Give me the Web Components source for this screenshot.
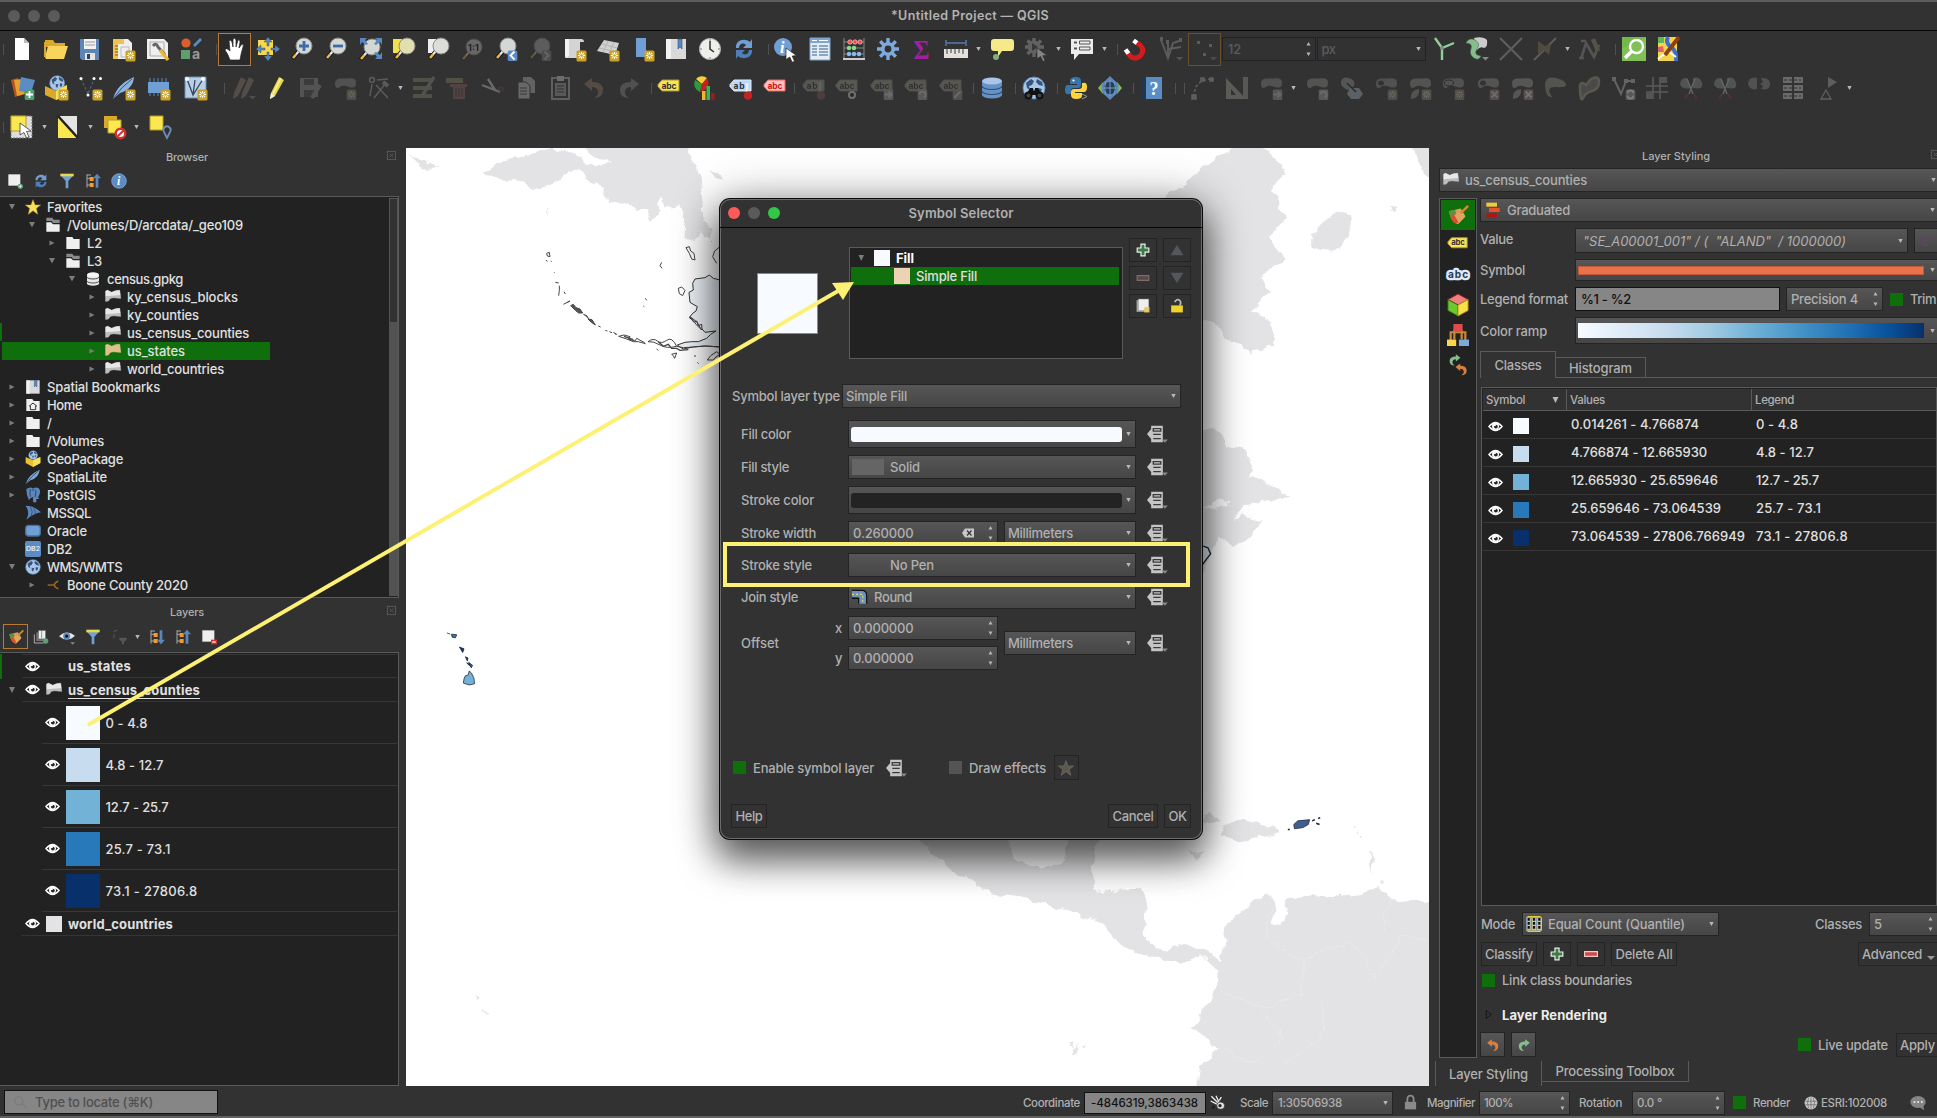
<!DOCTYPE html>
<html lang="en">
<head>
<meta charset="utf-8">
<title>QGIS</title>
<style>
html,body{margin:0;padding:0;background:#323232;width:1937px;height:1118px;overflow:hidden}
body{font:450 13px/18px Inter,"Liberation Sans",sans-serif;color:#b0b0b0}
</style>
</head>
<body>
<qgis-app></qgis-app>
<script>
/* ---------- icon drawings, 24 x 24 grid ---------- */
const star8='<path d="M0-3.6V3.6M-3.6 0H3.6M-2.6-2.6L2.6 2.6M-2.6 2.6L2.6-2.6" stroke="#fff" stroke-width="1.1"/><circle r="1.3" fill="#c9a227"/>';
const badge=`<g transform="translate(18.5 18.5)"><rect x="-5" y="-5" width="10" height="11" rx="1.5" fill="#c9a227"/>${star8}</g>`;
const sq=(c,i)=>`<g transform="translate(18.5 18.5)"><rect x="-4.8" y="-5" width="9.6" height="10.5" rx="1.5" fill="${c}"/>${i}</g>`;
const wp=d=>`<path d="${d}" stroke="#fff" stroke-width="1.8" fill="none"/>`;
const lens=(cx,cy,f)=>`<path d="M${cx-5} ${cy+5}L${cx-11.5} ${cy+12.5}" stroke="#111" stroke-width="4"/><path d="M${cx-8} ${cy+8.5}L${cx-11} ${cy+12}" stroke="#f4b942" stroke-width="2.6"/><path d="M${cx-5} ${cy+5}L${cx-8} ${cy+8.5}" stroke="#eee" stroke-width="2.2"/><circle cx="${cx}" cy="${cy}" r="8" fill="${f||'#d4d8d4'}" stroke="#8a8a8a"/>`;
const tag=(f,b,t,c)=>`<path d="M1 8.5L5 4H22V15H5L1 10.5Z" fill="${f}" stroke="${b}"/><text x="4.500" y="12.500" font-size="8.500" font-weight="700" fill="${c||'#333'}" textLength="${t==='ab'?11:15}" font-family="Inter">${t||'abc'}</text>`;
const blob='<path d="M2 7C3 1 9 3 14 2.500S23 2 23 7S20 12 16 11S10 9 7 11S2 12 2 7Z" fill="#a8aca6"/>';
const sync='<path d="M4 11C3 4 12 0 18 5L20 2V11H11L14 8C11 5 7 7 7 11Z" fill="#6f9fd4"/><path d="M20 13C21 20 12 24 6 19L4 22V13H13L10 16C13 19 17 17 17 13Z" fill="#4f7fb8"/>';
const pal='<path d="M2 8L15 5L20 13L12 22Q5 21 2 8Z" fill="#d9a05a"/><path d="M2 8L9 6L10 12L4 15Z" fill="#5f8f40"/><path d="M4 13L10 11L14 20L9 21Q5 19 4 13Z" fill="#d9502a"/><path d="M8 12L16 8L20 14L13 21Z" fill="#e0a560"/><path d="M15 10L23 2" stroke="#d98a2a" stroke-width="2.6"/>';
const polyd='M1 3L4 2L10 5L16 2.500L22 2L23.500 14L18 13.500L13 13L8 14L5 18L1 18.500Z';
const dd='<path d="M17 20H24L20.500 23.500Z" fill="#888"/>';
const globe='<circle cx="12" cy="12" r="11" fill="#a9c6e8" stroke="#5b87bd"/><path d="M4 7L9 3L12 5L10 9L7 10L8 14L5 12ZM15 3L20 6L21 10L17 9L14 6ZM10 13L14 14L12 19L10 17ZM16 12L20 13L18 18L16 16Z" fill="#36557c"/>';
const fold='<path d="M2 3H11L13 6H22V21H2Z" fill="#efefef"/>';
const curs='<path d="M0 0L11 8L6.500 8.500L9 14L6.500 15L4 9.500L0 12Z" fill="#fff" stroke="#222" stroke-width=".7"/>';
const db='<path d="M2 5V19A10 3.500 0 0 0 22 19V5Z" fill="#6792c6"/><ellipse cx="12" cy="5" rx="10" ry="3.500" fill="#a9c6e8"/><path d="M2 10A10 3.500 0 0 0 22 10M2 15A10 3.500 0 0 0 22 15" stroke="#2c4f7c" fill="none" stroke-width="1.200"/>';
const tree='<path d="M3 2V22M3 3H9M3 8H9M3 18H9" stroke="#aaa" stroke-width="1.500" fill="none"/><path d="M7 6H13V12H7ZM7 15H13V21H7Z" fill="#f09a30"/>';
const undo='<path d="M2 8L10 2V6Q21 6 21 14T12 22Q17 19 16 15T10 11V15Z" fill="#d9803c"/>';
const redo='<path d="M22 8L14 2V6Q3 6 3 14T12 22Q7 19 8 15T14 11V15Z" fill="#86bd8c"/>';
const cross=wp('M-3-3L3 3M3-3L-3 3'),right=wp('M-4 0H3M0-3L3 0L0 3'),turn=wp('M-3 0A3 3 0 1 1 1 3');
const part='<path d="M3 23Q2 14 11 13Q12 22 3 23Z" fill="#aaa"/>';
const I={
new:'<path d="M5 1H14L19 6V23H5Z" fill="#fff"/><path d="M14 1V6H19" fill="#bbb"/>',
open:'<path d="M1 3H9L11 6H21V10H1Z" fill="#d9a92e"/><path d="M1 20L4 9H24L20 22H2Z" fill="#f8d45c"/><path d="M1 5V20" stroke="#d9a92e" stroke-width="2"/>',
save:'<path d="M2 2H21V23H4L2 21Z" fill="#5d86b8"/><path d="M6 2H18V12H6Z" fill="#f2f2f2"/><path d="M7 5H17M7 8H17" stroke="#999"/><path d="M7 16H17V23H7Z" fill="#e4e4e4"/><path d="M9 17H12V22H9Z" fill="#345"/>',
layout:'<path d="M1 2H16L20 6V22H1Z" fill="#eee"/><path d="M1 2H6V22H1ZM6 2H12V7H6Z" fill="#eec54a"/><path d="M3 9H6M3 12H6M3 15H6M3 18H6" stroke="#7a5c10"/><path d="M9 10H17V20H9Z" stroke="#bbb" fill="none"/>'+badge,
layman:'<path d="M1 2H18L22 6V22H1Z" fill="#efefef"/><path d="M4 5H18V19H4Z" stroke="#aaa" fill="none"/><path d="M7 9Q10 5 12 10L19 18" stroke="#666" stroke-width="3" fill="none"/><path d="M14 13L22 23" stroke="#e8b93c" stroke-width="3.600"/>',
style:'<circle cx="6" cy="6" r="4.600" fill="#d95f2f"/><path d="M14 9L21 2" stroke="#5d8cc4" stroke-width="2.600"/><path d="M1 13H10V22H1Z" fill="#5f9e6e"/><text x="12" y="22" font-size="14" font-family="Inter" font-weight="700" fill="#9a9a9a">a</text>',
hand:'<path d="M7 23Q5 17 2 13Q3 10 7 14L6 4Q8 2 9 5L10 10L10 2Q12 0 13 3V10L15 3Q17 2 17 5L16 11L19 7Q21 7 20 10Q18 16 17 23Z" fill="#fff" stroke="#222" stroke-width=".7"/>',
pansel:'<path d="M2 3H17V18H2Z" fill="#f4d94a"/><path d="M12 0L16 5H13V9H11V5H8ZM24 12L19 8V11H15V13H19V16ZM12 24L8 19H11V15H13V19H16ZM0 12L5 16V13H9V11H5V8Z" fill="#5b87bd" stroke="#2c3f58" stroke-width=".4"/>',
zin:lens(14,9)+'<path d="M14 4V14M9 9H19" stroke="#3c6ba5" stroke-width="2.800"/>',
zout:lens(14,9)+'<path d="M9 9H19" stroke="#3c6ba5" stroke-width="2.800"/>',
zfull:lens(13,10)+'<path d="M1 1H8L6 3L9 7L7 8L3 5L1 8ZM23 1H16L18 3L15 7L17 8L21 5L23 8ZM23 22H16L18 20L15 16L17 15L21 18L23 15Z" fill="#5b87bd"/>',
zsel:'<path d="M1 2H12V16H1Z" fill="#f4e04a"/>'+lens(15,9,'#e2dfae'),
zlay:'<path d="M2 2H13V16H2Z" fill="#eee"/>'+lens(15,9,'#dcdcd8'),
z11:'<g opacity=".32">'+lens(14,10)+'<text x="8" y="14" font-size="9" font-weight="700" font-family="Inter">1:1</text></g>',
zlast:lens(14,9)+sq('#5b8cc4',wp('M2-4L-2 0L2 4')),
znext:'<g opacity=".25">'+lens(14,9)+sq('#999',wp('M-2-4L2 0L-2 4'))+'</g>',
mapv:'<path d="M2 2H18Q21 2 21 5H17V21H3Q2 21 2 19Z" fill="#d4d4d4"/><path d="M2 2H6V19L3 21Q2 20 2 18Z" fill="#f2f2f2"/>'+badge,
map3:'<path d="M8 3L23 6L19 18L1 14Z" fill="#d0d0d0"/><path d="M6 7L21 11M3 11L20 15M12 4L7 15M18 5L13 17" stroke="#b4b4b4"/>'+badge,
bmnew:'<path d="M5 1H15V20H5Z" fill="#6f9fd4"/>'+badge,
bm:'<path d="M2 2H22V22H2Z" fill="#d9d9d9"/><path d="M2 2H7V22H2Z" fill="#f2f2f2"/><path d="M14 2H18V12L16 10L14 12Z" fill="#5b87bd" stroke="#2c4f7c" stroke-width=".6"/>',
clock:'<circle cx="12" cy="12" r="10.600" fill="#efefea" stroke="#aaa"/><path d="M12 4V12L16 15" stroke="#333" stroke-width="1.500" fill="none"/><path d="M12 2V4M22 12H20M12 22V20M2 12H4" stroke="#777"/>',
sync,
ident:'<circle cx="10" cy="10" r="9" fill="#6f9fd4"/><text x="7" y="16" font-size="16" font-style="italic" font-weight="700" fill="#fff" font-family="Liberation Serif">i</text><g transform="translate(13 11) scale(.95)">'+curs+'</g>',
table:'<path d="M2 1H22V23H2Z" fill="#e4ecf4" stroke="#7fa5cc"/><path d="M2 1H22V6H2Z" fill="#7fa5d4"/><path d="M4 9H9M4 12H9M4 15H9M4 18H9M11 9H20M11 12H20M11 15H20M11 18H20" stroke="#6f8fb0" stroke-width="1.300"/><path d="M4 3.500H9M11 3.500H20" stroke="#fff"/>',
abac:'<path d="M2 1V22M22 1V22M2 5H22M2 11H22M2 17H22" stroke="#888" fill="none"/><path d="M1 22H23" stroke="#ccc" stroke-width="2"/><g fill="#f44" stroke="#fff" stroke-width=".5"><circle cx="8" cy="5" r="2.200"/><circle cx="13" cy="5" r="2.200"/><circle cx="18" cy="5" r="2.200"/></g><g fill="#8d8"><circle cx="7" cy="11" r="2.200"/><circle cx="12" cy="11" r="2.200"/></g><g fill="#8be"><circle cx="7" cy="17" r="2.200"/><circle cx="12" cy="17" r="2.200"/><circle cx="17" cy="17" r="2.200"/></g>',
gear:'<g stroke="#7da9dc" stroke-width="3.400"><path d="M12 1V23M1 12H23M4.200 4.200L19.800 19.800M4.200 19.800L19.800 4.200"/></g><circle cx="12" cy="12" r="7" fill="#7da9dc"/><circle cx="12" cy="12" r="3.400" fill="#323232"/>',
sigma:'<text x="3.500" y="21.500" font-size="27" font-weight="700" font-family="Liberation Serif" textLength="16" lengthAdjust="spacingAndGlyphs" fill="#a020a0">Σ</text>',
meas:'<path d="M1 6H23M2 3V9M22 3V9" stroke="#4a6890" stroke-width="2"/><path d="M0 12H24V21H0Z" fill="#e4e0dc"/><path d="M3 12V17M7 12V16M11 12V17M15 12V16M19 12V17" stroke="#555" stroke-width="1.200"/>',
tip:'<path d="M4 2H21Q24 2 24 5V11Q24 14 21 14H12L8 20V14H4Q1 14 1 11V5Q1 2 4 2Z" fill="#f5e98a"/><circle cx="6" cy="20" r="3" fill="#7fb07f"/>',
act:'<g opacity=".4"><g stroke="#aaa" stroke-width="3.400"><path d="M10 1V20M1 10H20M3.500 3.500L17 17M3.500 17L17 3.500"/></g><circle cx="10" cy="10" r="6.500" fill="#aaa"/><path d="M8 6L14 10L8 14Z" fill="#444"/><g transform="translate(13 11) scale(.9)">'+curs+'</g></g>',
form:'<path d="M1 2H23V17H9L4 23V17H1Z" fill="#ececec"/><path d="M4 5.500H7M4 11.500H7" stroke="#555" stroke-width="2"/><path d="M9.500 4H20V7H9.500ZM9.500 10H20V13H9.500Z" fill="none" stroke="#555"/>',
magnet:'<path d="M11 4.500L16 8Q21 13 17 18T7 20L3 15" fill="none" stroke="#d01c1c" stroke-width="5"/><path d="M9.500 3.500L13 6M1.500 12.500L4.500 16.500" stroke="#fff" stroke-width="4.500"/>',
snapv:'<g opacity=".3" stroke="#bbb" stroke-width="2" fill="none"><path d="M2 3L9 21L14 6L20 4M9 21V6M9 12L22 10"/><path d="M1 2H4M7 5H10M20 3H23" stroke-width="4"/></g><g opacity=".4">'+dd+'</g>',
snapt:'<g opacity=".3" fill="#bbb"><path d="M4 4H7V7H4ZM16 7H19V10H16ZM10 16H13V19H10Z"/>'+dd+'</g>',
topo:'<path d="M4 1L11 11L23 6M11 11V23" stroke="#8fd09a" stroke-width="2.400" fill="none"/><circle cx="11" cy="11" r="2" fill="#888"/>',
topo2:'<path d="M9 1Q18-1 22 3Q23 10 19 11Q15 9 12 13Z" fill="#ccc"/><path d="M1 6Q4 0 10 3T12 12T16 19Q14 24 9 21T6 12T1 6Z" fill="#86bd8c" stroke="#4c6c50" stroke-width=".6"/>'+dd,
xx:'<path d="M1 1L23 23M23 1L1 23" stroke="#777" opacity=".65" stroke-width="2"/>',
xz:'<g opacity=".5"><path d="M1 23L23 1" stroke="#888" stroke-width="2"/><path d="M5 4L12 9L18 7L16 18L11 13L5 18Z" fill="#6d6550"/></g>',
nn:'<g opacity=".5" stroke="#777" stroke-width="2.600" fill="none"><path d="M3 22L8 6L16 20L21 8M3 4H8M1 21H6"/><path d="M15 2L20 14" stroke="#7a7258" stroke-width="4.500"/></g>',
osmq:'<path d="M0 0H24V24H0Z" fill="#74b84c"/><path d="M0 24V12L24 0V24Z" fill="#8cc860" opacity=".5"/><circle cx="14.500" cy="9.500" r="6.500" fill="none" stroke="#fff" stroke-width="2.400"/><path d="M10 14L3 21" stroke="#fff" stroke-width="3.400"/>',
osmm:'<path d="M2 0H21V24H2Z" fill="#f6d44a"/><path d="M2 0H8V6H2Z" fill="#5db85a"/><path d="M12 0Q9 6 15 10T20 24" stroke="#3a6fd0" stroke-width="4" fill="none"/><path d="M2 10L7 9L8 15H2Z" fill="#d66"/><path d="M2 22L12 14L20 20" stroke="#fff" stroke-width="2" fill="none"/><path d="M23 0L9 18" stroke="#8c3f12" stroke-width="4"/>',
dsm:'<path d="M0 4L7 2L11 19L4 21Z" fill="#b5541d"/><path d="M3 4L11 3L14 18L6 20Z" fill="#e8a030"/><path d="M10 1L24 4L20 17L8 15Z" fill="#5b8cc4"/>'+sq('#4fa070',wp('M0-3.500V3.500M-3.500 0H3.500')),
gpk:'<g transform="translate(5 -1) scale(.6)">'+globe+'</g><path d="M1 9L12 14L23 9V18L12 24L1 18Z" fill="#e8c32c"/><path d="M12 14L23 9V18L12 24Z" fill="#f8e05a"/>',
gpknew:'<g transform="translate(4 -1) scale(.68)">'+globe+'</g><path d="M0 10L11 15L22 9V19L11 24L0 19Z" fill="#d9a92e"/><path d="M11 15L22 9V19L11 24Z" fill="#f8e05a"/>'+badge,
vnew:'<path d="M2 3L9 18L15 3" stroke="#4a6484" stroke-width="1.200" fill="none" stroke-dasharray="2.500 2"/><g fill="#fff"><circle cx="2" cy="2.500" r="1.500"/><circle cx="9" cy="19" r="1.500"/><circle cx="15" cy="2.500" r="1.500"/><circle cx="21.500" cy="2.500" r="1.500"/></g>'+badge,
spat:'<path d="M1 23Q5 8 22 1Q21 13 8 17Z" fill="#7fa8d8"/><path d="M1 23Q9 11 20 3" stroke="#26405e" stroke-width="1.200" fill="none"/>',
spatn:'<path d="M1 23Q5 8 22 1Q21 13 8 17Z" fill="#8fb4de"/><path d="M1 23Q9 11 20 3" stroke="#2f5685" fill="none"/>'+badge,
chip:'<path d="M3 2V20M7 2V20M11 2V20M15 2V20M19 2V20" stroke="#5b87bd"/><path d="M1 6H22V17H1Z" fill="#6f9fd4"/>'+badge,
vsh:'<path d="M1 1H22V22H1Z" fill="#b9cfe8" stroke="#6d8db5"/><path d="M3 3L9 19L19 3M11 4L9 19" stroke="#33475f" stroke-width="1.300" fill="none"/><circle cx="3" cy="3" r="2" fill="#fff"/><circle cx="19" cy="3" r="2" fill="#fff"/>'+badge,
penc:'<path d="M7 17L15 1L20 4L11 20L6 23Z" fill="#e6d84a"/><path d="M9 18L17 2" stroke="#fbf4a0" stroke-width="1.600"/><path d="M7 17L11 20L6 23Z" fill="#eee"/>',
penc2:'<g opacity=".33"><path d="M2 17L9 1L14 4L6 20L1 23ZM10 17L17 1L22 4L14 20L9 23Z" fill="#988478"/>'+dd+'</g>',
saveE:'<g opacity=".28"><path d="M2 2H20V21H2Z" fill="#aaa"/><path d="M6 3H16V9H6ZM6 14H16V21H6Z" fill="#555"/><path d="M14 22L22 9" stroke="#aaa" stroke-width="4"/></g>',
blobn:'<g opacity=".26">'+blob+sq('#a8a080',star8)+'</g>',
vert:'<g opacity=".3" stroke="#bbb" stroke-width="1.500" fill="none"><circle cx="4" cy="4" r="2.400"/><path d="M4 8L2 20M9 4L20 3M6 22L17 8M8 9L20 22"/><path d="M15 6L20 10" stroke-width="4"/></g>',
multi:'<g opacity=".26"><path d="M1 2H20V6H1ZM1 10H20V14H1ZM1 18H20V22H1Z" fill="#a8a878"/><path d="M10 20L22 1" stroke="#aaa" stroke-width="3.500"/></g>',
del:'<g opacity=".26"><path d="M1 2H18V7H1Z" fill="#a8a878"/><path d="M5 8H22V11H20V23H8V11H5Z" fill="#b07070"/><path d="M11 12V21M14 12V21M17 12V21" stroke="#444"/></g>',
cut:'<g opacity=".4" stroke="#bbb" stroke-width="2.400"><path d="M2 9L20 16M8 3L15 14"/><circle cx="21" cy="13" r="2" fill="none" stroke="#644" stroke-width="1.500"/></g>',
copy:'<g opacity=".35"><path d="M9 1H17L21 5V17H9Z" fill="#bbb"/><path d="M4 6H12L16 10V23H4Z" fill="#ccc" stroke="#333"/><path d="M6 12H13M6 15H13M6 18H13" stroke="#444"/></g>',
paste:'<g opacity=".38"><path d="M4 2H21V23H4Z" fill="none" stroke="#aaa" stroke-width="2"/><path d="M9 0H16V5H9Z" fill="#ccc"/><path d="M7 7H18V20H7Z" fill="#999"/><path d="M9 10H16M9 13H16M9 16H16" stroke="#333"/></g>',
undoD:'<g opacity=".3">'+undo.replace('#d9803c','#a88474')+'</g>',redoD:'<g opacity=".26">'+redo.replace('#86bd8c','#a0aaa0')+'</g>',undo,redo,
tag:tag('#f8e45a','#a8952a'),
diag:'<path d="M9 8L3 3A8 8 0 0 1 14 2Z" fill="#f4d03a"/><path d="M9 8L2 4Q-1 12 7 16Z" fill="#2a9d3a"/><path d="M9 8L14 2Q18 8 12 14L7 16Z" fill="#c8201c"/><path d="M9 15H12.500V24H9Z" fill="#f4b42a"/><path d="M13.500 10H17V24H13.500Z" fill="#3ab45a"/><path d="M18 17H21.500V24H18Z" fill="#a81818"/>',
tagpin:tag('#bcd8f8','#dcecff','ab','#333')+'<path d="M18 7V16" stroke="#eee" stroke-width="2.600"/><circle cx="19" cy="19.500" r="4.300" fill="#c02424"/>',
tagred:tag('#f8c4c4','#ff5a5a','abc','#d01818'),
tpD:'<g opacity=".25">'+tag('#c8c4a8','#aaa','ab')+'<path d="M18 6V16" stroke="#eee" stroke-width="2.600"/><circle cx="19" cy="19.500" r="4.300" fill="#a06060"/></g>',
teD:'<g opacity=".3">'+tag('#b8b49a','#999')+'<circle cx="17" cy="19" r="3" fill="#111" stroke="#fff" stroke-width="2"/></g>',
tmD:'<g opacity=".28">'+tag('#b8b49a','#999')+sq('#bbb',right)+'</g>',
trD:'<g opacity=".28">'+tag('#b8b49a','#999')+sq('#bbb',turn)+'</g>',
tcD:'<g opacity=".28">'+tag('#b8b49a','#999')+sq('#a8a48a',wp('M-3 3L3-3'))+'</g>',
db,
meta:globe+'<path d="M4 19L8 12H11V15H13V12H16L20 19Z" fill="#111"/><circle cx="6.500" cy="19.500" r="4" fill="#111"/><circle cx="17.500" cy="19.500" r="4" fill="#111"/><circle cx="6.500" cy="19.500" r="2" fill="#444"/><circle cx="17.500" cy="19.500" r="2" fill="#444"/>',
py:'<path d="M12 1Q6 1 6 5V8H13V9H4Q1 9 1 14T5 18H7V14Q7 12 10 12H14Q17 12 17 9V5Q17 1 12 1Z" fill="#3776ab"/><path d="M12 23Q18 23 18 20V17H11V16H20Q23 16 23 11T19 7H18V10Q18 13 15 13H10Q7 13 7 16V19Q7 23 12 23Z" fill="#ffd43b"/><circle cx="9.500" cy="4.500" r="1.100" fill="#fff"/><path d="M18 18L23 20.500L18 23" stroke="#999" fill="none"/>',
gcp:'<path d="M5 6L0 12L5 18ZM19 6L24 12L19 18Z" fill="#8ab857"/><path d="M12 0L18 6H6ZM12 24L18 18H6Z" fill="#5b87bd"/><circle cx="12" cy="12" r="7.500" fill="#2b3b50" stroke="#5b87bd" stroke-width="2.500"/><path d="M4 12H20M12 4V20M8 6Q5 12 8 18M16 6Q19 12 16 18" stroke="#6f9fd4" fill="none"/>',
help:'<path d="M2 1H22V23H2Z" fill="#5b8cc4"/><path d="M2 1H6V23H2Z" fill="#22364e"/><text x="9.500" y="18.500" font-size="18" font-weight="700" fill="#fff" font-family="Liberation Serif">?</text>',
curve:'<g opacity=".32" fill="none" stroke="#bbb" stroke-width="1.600"><path d="M3 21Q3 4 20 3" stroke-dasharray="3 2"/><path d="M1 19H5V23H1ZM10 2H13V5H10ZM19 2H22V5H19Z" fill="#bbb"/></g>',
tri:'<g opacity=".36"><path d="M1 2V23H21Z" fill="#aaa498"/><path d="M6 13V19H11Z" fill="#323232"/><path d="M18 1H23V23H18Z" fill="#999"/></g>',
bmv:'<g opacity=".26">'+blob+sq('#bbb',right)+'</g>',
brot:'<g opacity=".28">'+blob+sq('#bbb',turn)+'</g>',
bsc:'<g opacity=".45"><path d="M1 6Q2 0 9 2T14 10L8 14Q0 11 1 6Z" fill="#7c827e"/><path d="M10 12H19L23 18L19 23H11L7 18Z" fill="#8e98a8"/><path d="M7 7L16 16" stroke="#222" stroke-width="1.500"/></g>',
bring:'<g opacity=".26">'+blob+'<ellipse cx="7" cy="7" rx="3" ry="2.500" fill="#333"/>'+sq('#a8a080',star8)+'</g>',
bpart:'<g opacity=".28">'+blob+part+sq('#a8a080',star8)+'</g>',
bfill:'<g opacity=".26">'+blob+'<ellipse cx="8" cy="7" rx="4.500" ry="3" fill="none" stroke="#222"/>'+sq('#a8a080',star8)+'</g>',
bdr:'<g opacity=".28">'+blob+'<ellipse cx="7" cy="7" rx="3" ry="2.500" fill="#333"/>'+sq('#b09090',cross)+'</g>',
bdp:'<g opacity=".3">'+blob+part+sq('#b09090',cross)+'</g>',
bresh:'<g opacity=".28"><path d="M2 7Q4 0 13 2T23 8T13 11T9 21Q2 22 2 7Z" fill="#aaa99a"/></g>',
boff:'<g opacity=".34"><path d="M14 3Q22-1 22 6T15 15T6 22T3 15T9 9Z" fill="#777" stroke="#a8a084" stroke-width="2.500"/></g>',
vsim:'<g opacity=".36"><path d="M2 3L9 18L14 5H22" stroke="#bbb" stroke-width="2" fill="none"/><path d="M0 1H4V5H0ZM12 3H16V7H12ZM19 3H23V7H19Z" fill="#bbb"/>'+sq('#999',wp('M-3-1A3 3 0 0 1 3-1M3 1A3 3 0 0 1-3 1'))+'</g>',
grid:'<g opacity=".33"><path d="M8 1V23M15 1V23M1 10H23M1 16H23" stroke="#aaa" stroke-width="1.600"/><path d="M15 1H22V7H15ZM1 17H7V23H1Z" fill="#999"/></g>',
bsp:'<g opacity=".36"><path d="M1 8Q2 1 8 2L12 12Q3 14 1 8ZM14 2Q21 0 23 7T14 12Z" fill="#8a8f8a"/><path d="M8 3L14 18M16 3L10 18" stroke="#bbb" stroke-width="1.500"/><path d="M9 18L6 23M15 18L18 23" stroke="#833" stroke-width="2"/></g>',
bmg:'<g opacity=".26"><path d="M1 8Q2 0 10 2V13Q3 15 1 8ZM14 2Q23 1 23 8T14 13L16 10L13 8L16 6Z" fill="#aaa"/></g>',
grid2:'<g opacity=".4" fill="#bbb"><path d="M2 1H11V7H2ZM13 1H22V7H13ZM2 9H11V15H2ZM13 9H22V15H13ZM2 17H11V23H2ZM13 17H22V23H13Z"/><path d="M3 4H20M3 12H20M3 20H20" stroke="#333" stroke-dasharray="3 2"/></g>',
tris:'<g opacity=".32"><path d="M12 1L21 6L12 12Z" fill="#bbb"/><path d="M10 14L15 23H5Z" fill="none" stroke="#bbb" stroke-width="1.300"/></g>',
selr:'<path d="M1 1H22V23H1Z" fill="#ddd" stroke="#777" stroke-dasharray="2 1"/><path d="M1 1H16V16H1Z" fill="#fbe74e" stroke="#b89c2a"/><g transform="translate(10 8)">'+curs+'</g>',
selx:'<path d="M2 2V23H21Z" fill="#fbe74e"/><path d="M2 1H21V21Z" fill="#e4e4e4"/><path d="M2 1L22 23" stroke="#222" stroke-width="2.500"/>',
desel:'<path d="M1 1H14V13H1Z" fill="#d9a92e"/><path d="M5 5H18V18H5Z" fill="#fbe74e" stroke="#b89c2a"/><circle cx="17.500" cy="18.500" r="4.800" fill="#fff" stroke="#d03030" stroke-width="2.400"/><path d="M14.500 21.500L20.500 15.500" stroke="#d03030" stroke-width="2"/>',
selv:'<path d="M2 1H15V15H2Z" fill="#fbe74e" stroke="#b89c2a"/><path d="M19 23L16 17A3.600 3.600 0 1 1 22 17Z" fill="none" stroke="#6d8db5" stroke-width="1.800"/>',
addl:'<path d="M2 2H20V19H2Z" fill="#eee"/><circle cx="20" cy="20" r="4" fill="#5f9e6e"/><path d="M20 17.500V22.500M17.500 20H22.500" stroke="#fff"/>',
filt:'<path d="M2 3H22L14 12V23H10V12Z" fill="#6f9fd4"/><path d="M2 1H22V5H2Z" fill="#e8d84a"/>',
coll:tree+'<path d="M16 22V8H12L18 1L24 8H20V22Z" fill="#5b87bd"/>',
expd:tree+'<path d="M16 2V16H12L18 23L24 16H20V2Z" fill="#5b87bd"/>',
info:'<circle cx="12" cy="12" r="11" fill="#5b8cc4" stroke="#8fb4de"/><text x="9" y="18.500" font-size="18" font-style="italic" font-weight="700" fill="#fff" font-family="Liberation Serif">i</text>',
fav:'<path d="M12 1L15 9H23.500L17 14L19 23L12 17.500L5 23L7 14L.5 9H9Z" fill="#f8e05a" stroke="#c8a020" stroke-width=".7"/>',
fold,foldo:'<path d="M2 1H11L13 4H22V9H12L10 6H2Z" fill="#8a8a8a"/><path d="M2 8H9L12 11H22V22H2Z" fill="#efefef"/>',
home:fold+'<path d="M6 14L12 9L18 14M8 13V19H16V13" fill="none" stroke="#222" stroke-width="1.400"/>',
dbw:'<path d="M3 6V19A9 3 0 0 0 21 19V6Z" fill="#e8e8e8"/><ellipse cx="12" cy="5.500" rx="9" ry="3.500" fill="#f6f6f6"/><path d="M3 9A9 3 0 0 0 21 9M3 15A9 3 0 0 0 21 15" stroke="#444" stroke-width="1.400" fill="none"/>',
poly:`<path d="${polyd}" fill="#bdbdbd" stroke="#bdbdbd" stroke-linejoin="round"/><path d="M1 3L4 2L10 5L16 2.500L22 2L23 9L1 11Z" fill="#e8e8e8"/>`,polyt:`<path d="${polyd}" fill="#dfc08c" stroke="#dfc08c" stroke-linejoin="round"/>`,
pg:'<path d="M2 3Q8-1 12 2Q20-1 22 4T19 16H22L20 18H17V22Q13 25 12 21V15L8 17L6 20Q2 12 2 3Z" fill="#5b87bd"/><path d="M8 3Q7 10 8 15M16 4Q17 9 15 15M12 2V6" stroke="#26405e" stroke-width="1.300" fill="none"/>',
ms:'<path d="M1 1Q14 1 24 11Q14 12 2 22Q8 12 1 1Z" fill="#5b87bd"/><path d="M8 3Q13 10 9 17M13 5Q17 10 15 14" stroke="#26405e" fill="none"/>',
ora:'<rect x="1" y="3.500" width="22" height="16" rx="4.500" fill="#6f9fd4" stroke="#4a709c" stroke-width="2"/>',
db2:'<rect x="0" y="0" width="24" height="24" rx="3" fill="#5b8cc4"/><text x="1.500" y="15.500" font-size="9" fill="#fff" font-family="Inter" textLength="21" lengthAdjust="spacingAndGlyphs">DB2</text>',
globe,wms:'<path d="M4 12H14M20 6Q8 12 20 18" stroke="#9a6420" stroke-width="2.200" fill="none"/>',
pal,
grp:'<path d="M2 8V21H16" stroke="#aaa" fill="none" stroke-width="1.500"/><path d="M5 5H16V18H5Z" fill="#777"/><path d="M8 2H19V15H8Z" fill="#eee" stroke="#555"/><path d="M13 3V14" stroke="#4a709c"/><circle cx="19" cy="18" r="4" fill="#5f9e6e"/>',
eyem:'<path d="M0 11Q11 0 24 10Q12 21 0 11Z" fill="#e4e4e4"/><circle cx="11.500" cy="11" r="5.200" fill="#5b87bd"/><circle cx="11.500" cy="11" r="2.200" fill="#111"/>'+dd,
expf:'<g opacity=".3"><path d="M3 5Q3 2 8 2M3 8V14" stroke="#999" stroke-width="2" fill="none"/><path d="M11 13H22V16L18 19V23H15V19L11 16Z" fill="#aaa"/></g>',
reml:'<path d="M2 2H20V19H2Z" fill="#eee"/><path d="M15 16H24V23H15Z" fill="#d83030"/><path d="M17 19.500H22" stroke="#fff" stroke-width="2"/>',
eye:'<path d="M0 12Q12-3 24 12Q12 27 0 12Z" fill="#fff"/><path d="M3 12Q12 3 21 12Q12 21 3 12Z" fill="#222"/><circle cx="12" cy="11.500" r="5.600" fill="#fff"/><circle cx="12.500" cy="12" r="3" fill="#222"/><circle cx="11" cy="10" r="1.600" fill="#fff"/>',
plus:'<path d="M8.500 2H15.500V8.500H22V15.500H15.500V22H8.500V15.500H2V8.500H8.500Z" fill="#3f7a4a" stroke="#e8f4e8" stroke-width="2"/>',
minus:'<path d="M1 8H23V16H1Z" fill="#d04848" stroke="#f4c8c8" stroke-width="2"/>',
minusD:'<path d="M2 8H22V16H2Z" fill="#584848" stroke="#7c6c6c" stroke-width="2"/>',
up:'<path d="M12 3L23 21H1Z" fill="#53565a"/>',down:'<path d="M12 21L23 3H1Z" fill="#53565a"/>',
dup:'<path d="M1 2H17V22H1Z" fill="#aaa"/><path d="M4 0H22V20H4Z" fill="#eee" stroke="#777" stroke-width=".8"/><path d="M14 14H23V23H14Z" fill="#e8c860"/>',
lock:'<path d="M2 11H22V23H2Z" fill="#f0d42a"/><path d="M8 5Q12-1 16 2T17 11" stroke="#bbb" stroke-width="3" fill="none"/>',
lockg:'<path d="M3 11H21V23H3Z" fill="#8a8a8a"/><path d="M7 11V7Q7 1 12 1T17 7V11" stroke="#8a8a8a" stroke-width="3" fill="none"/>',
ddef:'<path d="M0 12L5 6V2H19V22H5V18Z" fill="#c4c4c4"/><path d="M7.500 5.500H16.500V8.500H7.500ZM7.500 12.500H16.500M7.500 17.500H16.500" stroke="#3a3a3a" fill="none" stroke-width="1.600"/><path d="M18 18.500H25L21.500 22.500Z" fill="#8a8a8a"/>',
round:'<path d="M0 2H14Q22 2 22 10V22H10V12H0Z" fill="#6d92bd"/><path d="M0 2H15Q22 2 22 10V22M10 22V14H0" stroke="#111" stroke-width="1.800" fill="none"/><path d="M0 8H16V22" stroke="#e8dc5a" stroke-width="1.800" stroke-dasharray="3 3" fill="none"/>',
stard:'<path d="M12 1L15 9H23.500L17 14L19 23L12 17.500L5 23L7 14L.5 9H9Z" fill="#5c584a" stroke="#707070"/>',
grad:'<path d="M2 1H18V7H2Z" fill="#f8c83c"/><path d="M6 9H22V15H6Z" fill="#e8542a"/><path d="M2 17H18V23H2Z" fill="#b01414"/>',
halo:'<g font-size="11" font-weight="700" font-family="Inter"><text x="1" y="15" textLength="22" stroke="#dfe9f8" stroke-width="5" stroke-linejoin="round" fill="#dfe9f8">abc</text><text x="1" y="15" textLength="22" fill="#2b3b50">abc</text></g>',
cube:'<path d="M12 0L23 6L12 12L1 6Z" fill="#f08080" stroke="#a01818"/><path d="M1 6L12 12V24L1 18Z" fill="#6cc82c" stroke="#2b6c10"/><path d="M12 12L23 6V18L12 24Z" fill="#f8e04a" stroke="#a8901c"/>',
hier:'<path d="M8 6V17M16 6V17M4 18V9H20V18" stroke="#c88a3a" stroke-width="2.400" fill="none"/><path d="M7 0H17V8H7Z" fill="#e04c4c"/><path d="M0 17H10V24H0Z" fill="#f8d84a"/><path d="M13 17H24V24H13Z" fill="#7da9dc"/>',
hist:'<g transform="translate(1 -1) scale(.62)">'+redo+'</g><g transform="translate(8 9) scale(.64)">'+undo+'</g>',
quant:'<path d="M0 2H24V22H0Z" fill="#c8c89a"/><path d="M2 1H22M2 23H22" stroke="#e0cc3c" stroke-width="2"/><path d="M4 3V21M12 3V21M20 3V21" stroke="#111" stroke-width="3.400" stroke-dasharray="4 2"/><path d="M8 3V21M16 3V21M1 3V21" stroke="#7f97b4" stroke-width="2"/>',
bug:'<path d="M2 2L14 14M9 1L14 12M1 9L11 14M17 3L14 8" stroke="#eee" stroke-width="2"/><ellipse cx="16" cy="16" rx="6" ry="5.500" fill="#e4e4e4" stroke="#111"/><circle cx="15" cy="16" r="2.500" fill="#222"/><path d="M3 20L7 17" stroke="#111" stroke-width="2"/>',
wgl:'<circle cx="12" cy="12" r="11" fill="#c8c8c8"/><path d="M2 9H22M2 15H22M12 2V22M8 3Q4 12 8 21M16 3Q20 12 16 21" stroke="#555" fill="none"/>',
bub:'<ellipse cx="12" cy="10.500" rx="11.500" ry="9" fill="#858585"/><path d="M14 18L21 23L20 16Z" fill="#858585"/><path d="M5.500 10.500H8M11 10.500H13.500M16.500 10.500H19" stroke="#fff" stroke-width="2.500"/>',
mag:'<circle cx="10" cy="10" r="7" fill="none" stroke="#7b7b7b" stroke-width="2"/><path d="M15 15L22 22" stroke="#7b7b7b" stroke-width="2.500"/>',
flt:'<rect x="3" y="3" width="18" height="18" fill="none" stroke="#5c5c5c" stroke-width="2"/><path d="M8 8L16 16M16 8L8 16" stroke="#5c5c5c" stroke-width="2" fill="none"/>',
clr:'<path d="M0 12L6 3H24V21H6Z" fill="#c8c8c8"/><path d="M10 7L19 17M19 7L10 17" stroke="#333" stroke-width="2.400"/>',
eps:'<text x="4" y="20" font-size="24" font-weight="700" fill="#5d4566" font-family="Inter">ε</text>',
trir:'<path d="M7 3L18 12L7 21Z" fill="none" stroke="#141414" stroke-width="2"/>'
};

const base=`*{box-sizing:border-box}:host{box-sizing:border-box}.r{display:flex;align-items:center}.c{display:flex;flex-direction:column}.g{flex:1}q-text,q-icon,q-combo,q-spin,q-btn,q-check{flex:none}`;
function def(name,render,host){
  customElements.define(name,class extends HTMLElement{
    connectedCallback(){
      if(this.shadowRoot)return;
      const t=document.createElement('template');
      t.innerHTML=`<style>${base}:host{${host||'display:block'}}</style>`+render(this,(k,d)=>this.getAttribute(k)??d);
      this.attachShadow({mode:'open'}).append(t.content.cloneNode(true));
    }
  });
}
/* A run of text that tracks its letters to fill the width given by w */
customElements.define('q-text',class extends HTMLElement{
  connectedCallback(){
    if(this.shadowRoot)return;
    this.attachShadow({mode:'open'}).innerHTML='<style>:host{display:inline-block;white-space:pre}</style><slot></slot>';
    const w=+this.getAttribute('w');
    if(w){const n=this.textContent.length,m=this.getBoundingClientRect().width;if(m)this.style.letterSpacing=((w-m)/n).toFixed(3)+'px';}
  }
});
def('q-icon',(e,a)=>`<svg viewBox="0 0 24 24" width="${a('s',16)}" height="${a('s',16)}" style="display:block;overflow:visible">${I[a('n')]}</svg>`,'display:block');
const dot='<svg width="5" height="6" style="display:block;flex:none"><path d="M.300 1H4.700L2.500 5Z" fill="#b8b8b8"/></svg>';
const face='background:linear-gradient(#565656,#464646);border:1px solid #242424;';
def('q-combo',(e,a)=>`<style>:host{width:${a('w')}px;height:${a('h',24)}px;${e.hasAttribute('off')?'border:1px solid #222;color:#5c5c5c':face}}</style><slot></slot><span class="g"></span>${dot}`,'display:flex;align-items:center;padding:0 4px 0 3px');
def('q-spin',(e,a)=>`<style>:host{width:${a('w')}px;height:${a('h',24)}px;${e.hasAttribute('off')?'border:1px solid #222;color:#5c5c5c':face}}</style><slot></slot><span class="g"></span><svg width="5" height="16"><path d="M.500 4.500H4.500L2.500 1ZM.500 11.500H4.500L2.500 15Z" fill="#b8b8b8"/></svg>`,'display:flex;align-items:center;padding:0 4px');
def('q-btn',(e,a)=>`<style>:host{width:${a('w')}px;height:${a('h',24)}px;${e.hasAttribute('face')?face:'border:1px solid #242424'}}</style><slot></slot>`,'display:flex;align-items:center;justify-content:center');
def('q-check',()=>``,'display:block;width:13px;height:13px;background:#0f6f0d');

/* Toolbar strip: items are name@centre, '.' for a menu arrow, '|' for a grip; s sets the icon size */
def('q-toolbar',(e,a)=>{
  const s=+a('s',24);let x=0,out='';
  for(const it of a('items').split(/\s+/)){
    let [n,c]=it.split('@');c=+c;
    let w=s,h;
    if(n==='.'){w=5;h=dot}
    else if(n==='|'){w=2;h='<i class="grip"></i>'}
    else if(n[0]==='*'){w=33;h=`<span class="box" style="${n==='*snapt'?'border-color:#6b4f2c;background:none':''}"><q-icon n="${n.slice(1)}" s="24"></q-icon></span>`}
    else if(n==='SPIN'){w=94;h='<q-spin off w="94"><q-text style="margin-left:1px" w="13">12</q-text></q-spin>'}
    else if(n==='COMBO'){w=109;h='<q-combo off w="109"><q-text style="margin-left:1px" w="14">px</q-text></q-combo>'}
    else h=`<q-icon n="${n}" s="${s}"></q-icon>`;
    const l=Math.round((c-w/2)*2)/2;
    out+=`<span class="it" style="margin-left:${l-x}px;width:${w}px">${h}</span>`;x=l+w;
  }
  return `<style>.it{flex:none;display:block}.grip{display:block;width:1px;height:11px;background:#505050}.box{display:flex;align-items:center;justify-content:center;width:33px;height:33px;border:1px solid #b87a35;background:#2a2a2a}</style>${out}`;
},'display:flex;align-items:center;height:39px');

def('q-head',()=>`<style>.t{font-weight:600;font-size:12.500px;color:#b4b4b4}i{width:12px;height:12px;border-radius:50%;background:#5a5a5a;display:block;flex:none}.s{display:flex;gap:8px;padding-left:8px;width:900px}</style>
<div class="s"><i></i><i></i><i></i></div><q-text class="t" w="158" style="margin-left:-9px">*Untitled Project — QGIS</q-text>`,'display:flex;align-items:center;height:31px;border-top:2px solid #5c5c5c;border-bottom:1px solid #050505');

/* ---------- browser tree ---------- */
def('q-tree-row',(e,a)=>{
  const l=+a('l',0),o=a('a','');
  return `<style>:host{padding-left:${5+20*l}px}svg{flex:none}</style><svg width="10" height="10"><path d="${o==='v'?'M2 2H8L5 7.500Z':o==='>'?'M2.500 2.500L7.500 5L2.500 7.500Z':''}" fill="#7c7c7c"/></svg><q-icon n="${a('i')}" style="margin:0 6px 0 8px"></q-icon><q-text w="${a('w')}">${a('t')}</q-text>`;
},'display:flex;align-items:center;height:18px;color:#e0e0e0');

def('q-dock-title',(e,a)=>`<style>.t{font-size:11px}</style><q-text class="t" w="${a('w')}" style="margin-left:${a('x')}px">${a('t')}</q-text><span class="g"></span><q-icon n="flt" s="11" style="margin:-3px ${a('r',9)}px 0 0"></q-icon>`,'display:flex;align-items:center');

def('q-browser',()=>{
  const R=[['Favorites',0,'v','fav',55],['/Volumes/D/arcdata/_geo109',1,'v','foldo',176],['L2',2,'>','fold',15],['L3',2,'v','foldo',15],['census.gpkg',3,'v','dbw',76],['ky_census_blocks',4,'>','poly',111],['ky_counties',4,'>','poly',72],['us_census_counties',4,'>','poly',122],['us_states',4,'>','polyt',58,1],['world_countries',4,'>','poly',97],['Spatial Bookmarks',0,'>','bm',113],['Home',0,'>','home',35],['/',0,'>','fold',5],['/Volumes',0,'>','fold',57],['GeoPackage',0,'>','gpk',76],['SpatiaLite',0,'>','spat',60],['PostGIS',0,'>','pg',49],['MSSQL',0,'','ms',44],['Oracle',0,'','ora',40],['DB2',0,'','db2',25],['WMS/WMTS',0,'v','globe',75],['Boone County 2020',1,'>','wms',121]];
  return `<style>.box{height:402px;margin-right:7px;border:1px solid #5a5a5a;border-left:0;background:#222;display:flex;padding-top:1px}.rows{flex:1;margin-left:2px}
  .sb{width:9px;height:398px;background:#525252}.sb i{display:block;height:125px;background:#323232;border:1px solid #555}q-tree-row.sel{background:#0f6f0d;width:268px}
  .strip{width:2px;background:linear-gradient(#222 125px,#0f6f0d 125px,#0f6f0d 143px,#222 143px);margin-right:-2px}</style>
  <q-dock-title t="Browser" w="42" x="166" style="height:17px"></q-dock-title>
  <q-toolbar s="16" items="addl@15 sync@41 filt@67 coll@93 info@119" style="height:31px"></q-toolbar>
  <div class="box"><div class="strip"></div><div class="rows">${R.map(r=>`<q-tree-row class="${r[5]?'sel':''}" l="${r[1]}" a="${r[2]}" i="${r[3]}" w="${r[4]}" t="${r[0]}"></q-tree-row>`).join('')}</div><div class="sb"><i></i></div></div>`;
},'display:block;height:452px;flex:none');

def('q-layers',()=>{
  const C=[['0 - 4.8','#f7fbff',42],['4.8 - 12.7','#c8dcef',58],['12.7 - 25.7','#73b2d7',63],['25.7 - 73.1','#2879b9',65],['73.1 - 27806.8','#08306b',92]];
  return `<style>.box{margin-right:7px;flex:1;border:1px solid #5a5a5a;border-left:0;background:#222;color:#e0e0e0;padding-top:1px}
  .l{height:24px;margin-left:22px;border-bottom:1px solid #353535;padding-left:3px;font-weight:700}.l.t{border-top:1px solid #353535}
  .k{height:42px;margin-left:42px;border-bottom:1px solid #383838;padding-left:3px}.k i{width:34px;height:34px;margin:0 6px 0 5.500px}.k,.l{margin-right:1px}
  .strip{width:2px;height:25px;background:#0f6f0d;margin-bottom:-25px}</style>
  <q-dock-title t="Layers" w="34" x="170" style="height:24px"></q-dock-title>
  <div class="r" style="height:25px"><q-btn w="25" h="25" style="border-color:#b87a35;margin-left:3px"><q-icon n="pal"></q-icon></q-btn>
  <q-toolbar s="16" items="grp@13 eyem@39 filt@65 expf@92 .@109.500 expd@129 coll@155 reml@181" style="height:25px"></q-toolbar></div>
  <div class="box" style="margin-top:3px"><div class="strip"></div>
   <div class="r l t"><q-icon n="eye" s="15"></q-icon><q-text w="63" style="margin-left:28px">us_states</q-text></div>
   <div class="r l"><svg width="8" height="8" style="margin:0 15px 0 -16px;flex:none"><path d="M0 1H6L3 7Z" fill="#7c7c7c"/></svg><q-icon n="eye" s="15" style="margin-left:-7px"></q-icon><q-icon n="poly" style="margin:0 6px"></q-icon><q-text w="132" style="text-decoration:underline;text-underline-offset:3px">us_census_counties</q-text></div>
   ${C.map(c=>`<div class="r k"><q-icon n="eye" s="15"></q-icon><i style="background:${c[1]}"></i><q-text w="${c[2]}">${c[0]}</q-text></div>`).join('')}
   <div class="r l"><q-icon n="eye" s="15"></q-icon><i style="width:16px;height:16px;background:#e3e3e5;margin:0 6px"></i><q-text w="105">world_countries</q-text></div>
  </div>`;
},'display:flex;flex-direction:column;flex:1;min-height:0');

/* ---------- map canvas ---------- */
def('q-map',()=>`<svg width="1023" height="938" style="display:block"><rect width="1023" height="938" fill="#fff"/>
<defs><filter id="rough" x="-5%" y="-5%" width="110%" height="110%" color-interpolation-filters="sRGB"><feTurbulence type="fractalNoise" baseFrequency=".07" numOctaves="5" seed="4"/><feDisplacementMap in="SourceGraphic" scale="11" xChannelSelector="R" yChannelSelector="G"/></filter></defs>
<g filter="url(#rough)" fill="#e3e3e5"><g transform="translate(114 -3) scale(.33333)">
<path d="M-110 85L-60 50L0 30L50 20L90 12L130 18L185 36L192 50L215 60L268 56L258 38L225 35L190 12V-10H500L518 55L540 90L550 160L545 200L558 230L574 250L575 278L550 270L540 262L515 280L500 275L500 255L495 225L482 175L462 192L432 182L420 152L412 200L388 230L378 200L345 190L300 172L250 160L252 130L225 120L200 100L175 82L130 92L100 120L40 132L0 115L-45 105ZM572 75L600 85L608 105L585 98ZM78 200L86 182L80 210Z"/></g>
<g transform="translate(-6 -3) scale(.6601 .6122)">
<path d="M15 15L60 35L35 40ZM1150 95L1190 62L1235 22L1265 0H1300L1320 15L1345 45L1322 65L1332 95L1345 120L1315 150L1340 190L1305 215L1320 240L1292 270L1318 290L1325 328L1290 338L1260 318L1240 300L1216 285L1180 250ZM1530 -5H1570V65L1550 50ZM1385 145L1405 120L1425 105L1442 118L1437 150L1410 177L1385 168ZM1500 100L1510 98L1505 108Z"/>
<path d="M1190 462L1240 465L1252 490L1280 500L1292 528L1285 545L1295 540L1320 555L1350 572L1320 582L1292 580L1275 600L1262 612L1282 608L1305 615L1290 640L1262 655L1240 640L1230 665L1216 700H1180Z"/>
<path d="M1216 592L1240 578L1262 580L1235 596Z" fill="#fff"/>
<path d="M770 1120L830 1180L885 1218L960 1235L1010 1248L1050 1265L1080 1290L1110 1318L1150 1328L1185 1335L1215 1325L1240 1350L1230 1385L1215 1420L1200 1445L1225 1458L1240 1475L1212 1508L1208 1545H1570V1232L1500 1235L1480 1210L1440 1230L1400 1225L1345 1232L1335 1275L1322 1270L1326 1240L1315 1222L1290 1240L1265 1262L1250 1278L1245 1335L1215 1312L1190 1305L1150 1315L1125 1290L1130 1240L1120 1215L1052 1218L1050 1180L1062 1120H1015L1005 1172L970 1185L930 1165L912 1120Z"/>
<path d="M1225 1085L1245 1108L1210 1110ZM1250 1115L1262 1105L1300 1105L1335 1122L1300 1130L1285 1140L1245 1128ZM1192 1153L1222 1155L1210 1163ZM1470 1150L1478 1165L1472 1190ZM1484 1200L1492 1202L1488 1208ZM1010 1468L1015 1466L1018 1472ZM1016 1474L1028 1472L1026 1480L1018 1482ZM1036 1476L1042 1474L1040 1480ZM112 1385L118 1392L115 1396ZM128 1410L134 1420H130Z"/>
<path d="M1440 1115L1465 1140" stroke="#e3e3e5" stroke-width="3" stroke-dasharray="3 9"/>
</g></g>
<g filter="url(#rough)"><g transform="translate(-6 -3) scale(.6601 .6122)" fill="none" stroke="#ebebed" stroke-width="1.200"><path d="M1320 1245L1310 1300L1370 1330L1365 1390L1300 1410L1245 1380M1370 1330L1440 1300L1480 1360L1520 1290L1559 1300M1300 1410L1340 1460L1290 1500L1240 1475M1500 1235L1490 1290M1400 1390L1395 1460L1340 1500"/></g></g>
<g transform="translate(114 -3) scale(.33333)">
<path d="M600 405L580 400L568 390L555 398L525 402L518 415L520 435L507 442L510 472L532 485L528 498L518 505L508 518L516 524L522 532L530 528L535 542L545 538L546 552L555 562L588 558L572 568L560 580L535 590L515 590L495 592L472 600L480 606L490 612L520 606L560 603L600 606Z" fill="#eef3f8" stroke="#333" stroke-width="3"/>
<g fill="none" stroke="#444" stroke-width="3"><path d="M498 308L508 305L512 318L522 325L525 345L515 342L508 325ZM425 352L420 362L426 370M475 430L485 426L495 436L488 452L478 446ZM600 305L584 318L578 335L590 355M575 290V291M510 515L530 530L545 555L530 540ZM80 325L88 322L90 335L82 333ZM78 345L82 350M92 348L95 350M103 382V384M106 412L116 414M118 422V436L116 452M132 440L136 447M130 478L150 468L142 472"/>
<path d="M152 482L160 478L168 488L180 492L188 504L176 504L166 496ZM190 508L200 512L206 522M204 522L216 524L226 540L214 532Z" fill="#555"/><path d="M235 543L242 546M256 556L262 558M268 560L276 563M280 562L290 568L284 566"/>
<path d="M296 574L312 570L330 575L325 582L345 588L350 580L372 592L376 596L355 590L340 590L320 582ZM384 590Q400 578 412 588T440 586T470 604Q440 612 420 600T384 590ZM410 612L415 616M455 628L470 624L464 640L460 632ZM470 604L490 608L520 606L552 603L600 606M525 630V636M532 652L536 656M562 645L572 632L590 620L600 628L588 636L580 645ZM376 460L380 466M370 483L373 485"/><path d="M312 574L340 584M415 590L430 604L445 598L455 610L470 610L480 616L505 614" stroke-width="4"/></g></g>
<g transform="translate(-6 -3) scale(.6601 .6122)" stroke="#223" stroke-width="1.200">
<path d="M71 797L76 799" /><path d="M78 799L86 800L84 805L79 804Z" fill="#2879b9"/><path d="M90 820L97 823L95 829ZM99 836L103 838L102 843ZM101 846L106 848L108 853Z" fill="#08306b"/><path d="M104 845L110 850L108 854Z" fill="#2879b9"/>
<path d="M99 867L103 866L105 859L109 864L112 871L113 880L105 882L96 879L97 872Z" fill="#73b2d7"/>
<path d="M1354 1110L1360 1104L1378 1102L1376 1110L1368 1115L1355 1117Z" fill="#3d5f96"/><path d="M1382 1104L1386 1102M1391 1100L1394 1099M1388 1108L1393 1110M1345 1118H1348" stroke-width="2.500"/>
<path d="M1216 655L1224 658L1228 668L1222 676L1214 688" fill="#e4ecf4" stroke-width="2"/></g>
</svg>`,'display:block;width:1023px;height:938px;overflow:hidden;flex:none');

/* ---------- symbol selector window ---------- */
def('q-dialog',()=>{
  const dd='<q-icon n="ddef" s="20" style="margin-left:11px"></q-icon>';
  const L=(t,w)=>`<span class="lab"><q-text w="${w}">${t}</q-text></span>`;
  return `<style>
  .tb{height:29px;border-bottom:1px solid #050505;padding-left:8px}.tb i{width:12px;height:12px;border-radius:50%;margin-right:8px}
  .top{display:flex;height:156px;align-items:flex-start}.pv{width:61px;height:61px;margin:45px 31px 0 37px;background:#f7fbff;border:1px solid #888}
  .ls{width:274px;height:112px;margin-top:19px;border:1px solid #5a5a5a;background:#222;padding:1px 1px;color:#e0e0e0}.ls div{height:18px}.ls i{width:16px;height:16px;flex:none}
  .bs{display:grid;grid-template-columns:28px 28px;gap:4px 6px;margin:10px 0 0 6px}
  .row{display:flex;align-items:center;padding-left:21px}.lab{width:107px;flex:none}
  .sw{width:271px;height:15px;border-radius:3px;margin-left:-1px}
  </style>
  <div class="r tb"><i style="background:#fc5b57"></i><i style="background:#5a5a5a"></i><i style="background:#34c648"></i><q-text w="105" style="margin-left:120.500px;font-weight:600">Symbol Selector</q-text></div>
  <div class="top"><div class="pv"></div><div class="ls"><div class="r" style="font-weight:700;color:#fff"><svg width="8" height="8" style="margin:0 9px 0 6px"><path d="M1.500 1H7L4.250 7Z" fill="#7c7c7c"/></svg><i style="background:#f7fbff;margin-right:6px"></i><q-text w="18">Fill</q-text></div><div class="r" style="background:#0f6f0d;width:268px;padding-left:43px"><i style="background:#edd3b4;margin-right:6px"></i><q-text w="61">Simple Fill</q-text></div></div>
  <div class="bs">${['plus','up','minusD','down','dup','lock'].map(n=>`<q-btn w="28"><q-icon n="${n}" s="14"></q-icon></q-btn>`).join('')}</div></div>
  <div class="r" style="padding-left:12px"><span style="width:110px"><q-text w="108">Symbol layer type</q-text></span><q-combo w="339"><q-text w="61">Simple Fill</q-text></q-combo></div>
  <div class="row" style="margin-top:12px">${L('Fill color',50)}<q-combo w="288" h="28"><i class="sw" style="background:#f7fbff"></i></q-combo>${dd}</div>
  <div class="row" style="margin-top:7px">${L('Fill style',48)}<q-combo w="288"><i style="width:32px;height:16px;background:#656565;margin-right:6px"></i><q-text w="30">Solid</q-text></q-combo>${dd}</div>
  <div class="row" style="margin-top:7px">${L('Stroke color',73)}<q-combo w="288" h="28"><i class="sw" style="background:#232323"></i></q-combo>${dd}</div>
  <div class="row" style="margin-top:7px">${L('Stroke width',75)}<q-spin w="150"><q-text w="60.500">0.260000</q-text><q-icon n="clr" s="12" style="margin-left:48px"></q-icon></q-spin><q-combo w="132" style="margin-left:6px"><q-text w="65">Millimeters</q-text></q-combo>${dd}</div>
  <div class="row" style="margin-top:8px">${L('Stroke style',71)}<q-combo w="288"><q-text w="44" style="margin-left:38px">No Pen</q-text></q-combo>${dd}</div>
  <div class="row" style="margin-top:8px">${L('Join style',57)}<q-combo w="288"><q-icon n="round" style="margin-right:6px"></q-icon><q-text w="38">Round</q-text></q-combo>${dd}</div>
  <div class="row" style="margin-top:7px;height:54px"><span style="width:94px"><q-text w="38">Offset</q-text></span><div style="width:13px;line-height:30px"><div>x</div><div>y</div></div><div class="c" style="gap:6px;margin-right:6px"><q-spin w="150"><q-text w="60.500">0.000000</q-text></q-spin><q-spin w="150"><q-text w="60.500">0.000000</q-text></q-spin></div><q-combo w="132"><q-text w="65">Millimeters</q-text></q-combo>${dd}</div>
  <div class="r" style="margin-top:85px;height:25px;padding-left:13px"><q-check></q-check><q-text w="121" style="margin-left:7px">Enable symbol layer</q-text><q-icon n="ddef" s="20" style="margin-left:12px"></q-icon><q-check style="background:#545454;margin-left:43px"></q-check><q-text w="77" style="margin:0 8px 0 7px">Draw effects</q-text><q-btn w="25" h="25"><q-icon n="stard"></q-icon></q-btn></div>
  <div class="r" style="margin-top:24px;padding:0 11px 0 11px;gap:6px"><q-btn w="36"><q-text w="27">Help</q-text></q-btn><span class="g"></span><q-btn w="50"><q-text w="41">Cancel</q-text></q-btn><q-btn w="27"><q-text w="18">OK</q-text></q-btn></div>`;
},'display:block;width:482px;height:640px;background:#323232;border-radius:10px;box-shadow:inset 0 0 0 1px #6c6c6c,0 0 0 1px #0a0a0a,0 18px 36px 4px rgba(0,0,0,.6),0 0 50px rgba(0,0,0,.28);color:#b0b0b0');

/* ---------- layer styling dock ---------- */
def('q-styling',()=>{
  const C=[['0.014261 - 4.766874','#f7fbff',128,'0 - 4.8',42],['4.766874 - 12.665930','#c8dcef',136,'4.8 - 12.7',58],['12.665930 - 25.659646','#73b2d7',147,'12.7 - 25.7',63],['25.659646 - 73.064539','#2879b9',150,'25.7 - 73.1',65],['73.064539 - 27806.766949','#08306b',174,'73.1 - 27806.8',92]];
  return `<style>
  .body{display:flex;margin:6px 0 0 10px;height:860px}.side{width:38px;border:1px solid #5a5a5a;background:#222;padding:1px;flex:none}.side div{height:30px;display:flex;justify-content:center;align-items:center}
  .m{margin-left:3px;width:457px;flex:none}.lab{width:95px;flex:none}
  .tabs{display:flex;align-items:flex-end;height:27px}.tabs div{border:1px solid #5a5a5a;display:flex;align-items:center;justify-content:center}
  .tbl{margin:9px 0 0 1px;height:519px;border:1px solid #5a5a5a;background:#222;padding:1px 0 0 1px;color:#e0e0e0}
  .hd{height:22px;background:#323232;border-bottom:1px solid #5a5a5a;font-size:11.500px;color:#b0b0b0;display:flex}.hd div{border-right:1px solid #5a5a5a;display:flex;align-items:center;padding-left:3px;height:21px}
  .tr{height:28px;border-bottom:1px solid #383838;display:flex}.tr i{width:16px;height:16px;margin:7px 42px 0 10px}.tr q-icon{margin:8px 0 0 5px}.tr q-text{margin-top:4px}
  .bt{display:flex;margin-left:6px;align-items:flex-start}.bt div{border:1px solid #5a5a5a;border-top:0;display:flex;align-items:center;justify-content:center}
  </style>
  <q-dock-title t="Layer Styling" w="68" x="213" r="-4" style="height:16px"></q-dock-title>
  <q-combo w="502" style="margin:4px 0 0 10px"><q-icon n="poly" style="margin-right:6px"></q-icon><q-text w="122">us_census_counties</q-text></q-combo>
  <div class="body"><div class="side"><div style="background:#0f6f0d"><q-icon n="pal" s="22"></q-icon></div>${['tag','halo','cube','hier','hist'].map(n=>`<div><q-icon n="${n}" s="22"></q-icon></div>`).join('')}</div>
  <div class="m">
   <q-combo w="460"><q-icon n="grad" style="margin:0 6px 0 1px"></q-icon><q-text w="63">Graduated</q-text></q-combo>
   <div class="r" style="margin-top:6px"><span class="lab" style="margin-top:-3px"><q-text w="33">Value</q-text></span><q-combo w="333" h="25"><q-text w="263" style="font-style:italic;margin-left:4px">"SE_A00001_001" / (  "ALAND"  / 1000000)</q-text></q-combo><q-btn face w="30" h="25" style="margin-left:6px;justify-content:flex-start"><q-icon n="eps" style="margin-left:3px"></q-icon></q-btn></div>
   <div class="r" style="margin-top:6px"><span class="lab"><q-text w="45">Symbol</q-text></span><q-combo w="365" h="22"><i style="width:346px;height:9px;background:#e9724a;margin-left:-1px;border:1px solid #c05a3a"></i></q-combo></div>
   <div class="r" style="margin-top:6px"><span class="lab"><q-text w="88">Legend format</q-text></span><span class="r" style="width:205px;height:24px;background:#868686;border:1px solid #111;color:#111;padding-left:5px"><q-text w="50">%1 - %2</q-text></span><q-spin w="97" style="margin:0 7px 0 6px"><q-text w="67">Precision 4</q-text></q-spin><q-check></q-check><q-text w="26" style="margin-left:7px">Trim</q-text></div>
   <div class="r" style="margin-top:6px"><span class="lab"><q-text w="67">Color ramp</q-text></span><q-combo w="365" h="27"><i style="width:346px;height:15px;margin-left:-1px;background:linear-gradient(90deg,#f7fbff,#deebf7 13%,#c6dbef 26%,#9ecae1 39%,#6baed6 52%,#4292c6 65%,#2171b5 78%,#08519c 90%,#08306b)"></i></q-combo></div>
   <div class="tabs" style="margin-top:7px"><div style="width:76px;height:27px;border-bottom:0"><q-text w="47">Classes</q-text></div><div style="width:91px;height:21px;margin-left:-1px"><q-text w="63">Histogram</q-text></div><span style="flex:1;border-bottom:1px solid #5a5a5a"></span></div>
   <div class="tbl"><div class="hd"><div style="width:84px"><q-text w="39">Symbol</q-text><svg width="7" height="8" style="margin-left:27px"><path d="M.500 1H6.500L3.500 7Z" fill="#b8b8b8"/></svg></div><div style="width:185px"><q-text w="35">Values</q-text></div><div style="border:0"><q-text w="39">Legend</q-text></div></div>
   ${C.map(c=>`<div class="tr"><q-icon n="eye" s="15"></q-icon><i style="background:${c[1]}"></i><span style="width:185px"><q-text w="${c[2]}">${c[0]}</q-text></span><q-text w="${c[4]}">${c[3]}</q-text></div>`).join('')}</div>
   <div class="r" style="margin:6px 0 0 1px"><q-text w="34">Mode</q-text><q-combo w="197" style="margin-left:7px"><q-icon n="quant" style="margin-right:6px"></q-icon><q-text w="137">Equal Count (Quantile)</q-text></q-combo><q-text w="47" style="margin:0 7px 0 96px">Classes</q-text><q-spin w="69"><q-text>5</q-text></q-spin></div>
   <div class="r" style="margin:6px 0 0 1px;gap:6px"><q-btn w="56"><q-text w="48">Classify</q-text></q-btn><q-btn w="28"><q-icon n="plus" s="14"></q-icon></q-btn><q-btn w="28"><q-icon n="minus" s="14"></q-icon></q-btn><q-btn w="66"><q-text w="57">Delete All</q-text></q-btn><q-btn w="88" style="margin-left:175px;justify-content:flex-start;padding-left:3px"><q-text w="60">Advanced</q-text><svg width="8" height="12" style="margin-left:5px"><path d="M0 8H8L4 12Z" fill="#999"/></svg></q-btn></div>
   <div class="r" style="margin:5px 0 0 2px;height:18px"><q-check></q-check><q-text w="130" style="margin-left:7px">Link class boundaries</q-text></div>
   <div class="r" style="margin:17px 0 0 3px;height:17px"><q-icon n="trir" s="11"></q-icon><q-text w="105" style="margin-left:8px;font-weight:700;color:#ececec">Layer Rendering</q-text></div>
   <div class="r" style="margin-top:9px"><q-btn face w="25" h="25"><q-icon n="undo" s="14"></q-icon></q-btn><q-btn face w="25" h="25" style="margin-left:6px"><q-icon n="redo" s="14"></q-icon></q-btn><q-check style="margin-left:262px"></q-check><q-text w="70" style="margin:0 8px 0 7px">Live update</q-text><q-btn w="50" style="justify-content:flex-start;padding-left:3px"><q-text w="35">Apply</q-text></q-btn></div>
  </div></div>
  <div class="bt" style="margin-top:3px"><div style="width:107px;height:26px"><q-text w="79">Layer Styling</q-text></div><div style="width:148px;height:21px;margin-left:-1px"><q-text w="119">Processing Toolbox</q-text></div></div>`;
},'display:block;width:508px;overflow:hidden');

def('q-status',()=>`<style>.s{font-size:11.500px}</style>
<span class="r" style="width:214px;height:24px;margin:-1px 0 0 4px;background:#868686;border:1px solid #111;color:#505050;padding-left:8px"><q-icon n="mag" s="14"></q-icon><q-text w="118" style="margin-left:8px">Type to locate (⌘K)</q-text></span>
<q-text class="s" w="57" style="margin:0 4px 0 805px">Coordinate</q-text><span class="r s" style="width:122px;height:22px;background:#868686;border:1px solid #111;color:#111;padding-left:6px"><q-text w="107">-4846319,3863438</q-text></span><q-icon n="bug" style="margin:0 14px 0 4px"></q-icon>
<q-text class="s" w="28" style="margin-right:4px">Scale</q-text><q-combo w="121" class="s"><q-text w="64" style="margin-left:2px">1:30506938</q-text></q-combo><q-icon n="lockg" s="15" style="margin:0 9px 0 10px"></q-icon>
<q-text class="s" w="48" style="margin-right:4px">Magnifier</q-text><q-spin class="s" w="91"><q-text w="29">100%</q-text></q-spin><q-text class="s" w="43" style="margin:0 10px 0 9px">Rotation</q-text><q-spin class="s" w="93"><q-text w="25">0.0 °</q-text></q-spin><q-check style="margin:0 7px 0 8px"></q-check><q-text class="s" w="37">Render</q-text><q-icon n="wgl" s="14" style="margin:0 3px 0 14px"></q-icon><q-text class="s" w="66">ESRI:102008</q-text><q-icon n="bub" style="margin-left:23px"></q-icon>`,'display:flex;align-items:center;height:32px;padding-top:3px;border-bottom:2px solid #5f5f5f');

def('qgis-app',()=>`<style>
.bars{height:117px;display:block}.main{display:flex;height:938px;flex:none}.left{width:406px;display:flex;flex-direction:column;flex:none}
q-dialog{position:absolute;left:720px;top:199px}.ann{position:absolute;left:0;top:0;pointer-events:none}</style>
<q-head></q-head>
<div class="bars">
<q-toolbar items="|@4 new@21.600 open@55.500 save@90 layout@124 layman@158 style@192 |@217 *hand@234.500 pansel@268 zin@302 zout@336 zfull@371 zsel@404 zlay@438 z11@472 zlast@506 znext@540 mapv@575 map3@608 bmnew@643 bm@676 clock@709.500 sync@744 |@768.500 ident@785 table@820 abac@854 gear@888 sigma@922 meas@956 .@978 tip@1002 act@1036 .@1058 form@1082 .@1104.500 |@1118 magnet@1136 snapv@1171 *snapt@1204.500 SPIN@1269 COMBO@1371 topo@1443 topo2@1477 xx@1511 xz@1545 .@1567 nn@1590 |@1616 osmq@1633.500 osmm@1667.500" style="height:36px"></q-toolbar>
<q-toolbar items="|@4 dsm@23 gpknew@57 vnew@91 spatn@124 chip@159 vsh@196 |@224.500 penc2@244 penc@276 saveE@310 blobn@344.500 vert@379.500 .@400 multi@424 del@457 cut@492 copy@526 paste@560 undoD@594 redoD@628.500 |@652 tag@668.500 diag@704.500 tagpin@741 tagred@775 |@795 tpD@814 teD@847 tmD@881.500 trD@916 tcD@951 |@974 db@992 |@1016 meta@1034 |@1058 py@1076 gcp@1110 |@1134 help@1152 |@1176 |@1185 curve@1203 tri@1237 bmv@1271 .@1293 brot@1317 bsc@1352 bring@1385.500 bpart@1419.500 bfill@1453 bdr@1488 bdp@1522 bresh@1555 boff@1589 vsim@1623.500 grid@1657 bsp@1691 bsp@1725 bmg@1759 grid2@1793 tris@1827.500 .@1849" style="height:42px"></q-toolbar>
<q-toolbar items="|@4 selr@21.600 .@44 selx@68 .@90 desel@115 .@136 selv@160" style="height:36px"></q-toolbar>
</div>
<div class="main"><div class="left"><q-browser></q-browser><q-layers></q-layers></div><q-map></q-map><q-styling></q-styling></div>
<q-status></q-status>
<q-dialog></q-dialog>
<svg class="ann" width="1937" height="1118"><path d="M88 725L838 291" stroke="#fdf175" stroke-width="4"/><path d="M854 282L832 283L843 300Z" fill="#fdf175"/><rect x="725" y="544" width="463" height="41" fill="none" stroke="#fdf175" stroke-width="4"/></svg>`,
'display:flex;flex-direction:column;position:relative;width:1937px;height:1118px;background:#323232;overflow:hidden');
</script>
</body>
</html>
